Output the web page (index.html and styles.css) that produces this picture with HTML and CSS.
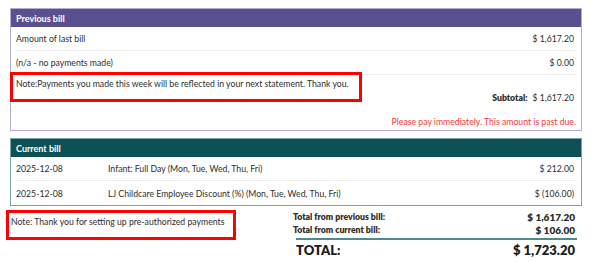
FILE: index.html
```html
<!DOCTYPE html>
<html lang="en">
<head>
<meta charset="utf-8">
<title>Statement</title>
<link rel="stylesheet" href="styles.css">
</head>
<body>
<div class="statement">
  <section class="card card-prev">
    <div class="card-head">Previous bill</div>
    <div class="line">
      <span>Amount of last bill</span>
      <span>$ 1,617.20</span>
    </div>
    <div class="line">
      <span>(n/a - no payments made)</span>
      <span>$ 0.00</span>
    </div>
    <div class="note-row">
      <span class="flagged flagged-wide">Note:Payments you made this week will be reflected in your next statement. Thank you.</span>
    </div>
    <div class="subtotal"><b>Subtotal:</b><span>$ 1,617.20</span></div>
    <div class="overdue">Please pay immediately. This amount is past due.</div>
  </section>

  <section class="card card-cur">
    <div class="card-head">Current bill</div>
    <div class="line">
      <span class="date">2025-12-08</span>
      <span class="desc">Infant: Full Day (Mon, Tue, Wed, Thu, Fri)</span>
      <span>$ 212.00</span>
    </div>
    <div class="line">
      <span class="date">2025-12-08</span>
      <span class="desc">LJ Childcare Employee Discount (%) (Mon, Tue, Wed, Thu, Fri)</span>
      <span>$ (106.00)</span>
    </div>
  </section>

  <div class="summary">
    <div class="summary-note">
      <span class="flagged flagged-small">Note: Thank you for setting up pre-authorized payments</span>
    </div>
    <div class="totals">
      <div class="total-line"><span>Total from previous bill:</span><span class="amt">$ 1,617.20</span></div>
      <div class="total-line"><span>Total from current bill:</span><span class="amt">$ 106.00</span></div>
      <div class="grand"><span>TOTAL:</span><span>$ 1,723.20</span></div>
    </div>
  </div>
</div>
</body>
</html>
```

FILE: styles.css
```css
* { box-sizing: border-box; }

body {
  margin: 0;
  background: #fff;
  font-family: Lato, "Open Sans", sans-serif;
  font-size: 8.7px;
  color: #2e2e2e;
}

.statement {
  width: 601px;
  padding: 8px 19px 0 10px;
}

.card {
  border: 1px solid #b3acd6;
}

.card-head {
  height: 18px;
  padding: 0 5px;
  display: flex;
  align-items: center;
  color: #fff;
  font-weight: 700;
  font-size: 9px;
}

.card-prev .card-head { background: #59518f; }

.card-cur {
  margin-top: 7px;
  border-color: #7fa3a5;
}
.card-cur .card-head { background: #0d5055; }

.line {
  display: flex;
  align-items: center;
  height: 24px;
  margin: 0 5px;
  padding: 0 2px 0 0;
  border-bottom: 1px solid #ececec;
}
.line > span:last-child { margin-left: auto; }
.card-cur .line:last-child { border-bottom: 0; }

.date { width: 92px; }

.note-row {
  height: 16px;
  display: flex;
  align-items: center;
  padding-left: 5px;
}

/* red annotation frame drawn around a note */
.flagged { position: relative; }
.flagged::after {
  content: "";
  position: absolute;
  border: 3px solid #f00;
  pointer-events: none;
}
.flagged-wide::after { left: -6px; top: -6px; width: 346px; height: 24px; }
.flagged-small::after { left: -5px; top: -6px; width: 224px; height: 24px; }

.subtotal {
  display: flex;
  justify-content: flex-end;
  gap: 5px;
  padding: 0 7px 0 0;
  height: 12px;
  align-items: center;
}
.subtotal b { font-weight: 800; }

.overdue {
  margin-top: 13px;
  height: 14px;
  text-align: right;
  padding-right: 5px;
  color: #f03a3a;
}

.summary {
  display: flex;
  justify-content: space-between;
  align-items: flex-start;
}

.summary-note {
  padding: 10px 0 0 1px;
}

.totals {
  width: 284px;
  margin-right: 5px;
  padding-top: 4px;
}

.total-line {
  display: flex;
  justify-content: space-between;
  height: 13px;
  align-items: center;
  padding: 0 2px 0 0;
  font-weight: 800;
  font-size: 8.7px;
}
.total-line .amt { font-size: 10px; }

.grand {
  display: flex;
  justify-content: space-between;
  align-items: center;
  height: 22px;
  margin: 2px 0 0 3px;
  padding: 0 2px 0 0;
  border-top: 2px solid #4f8a8e;
  font-weight: 800;
  font-size: 13px;
  color: #1f1f1f;
}
```
